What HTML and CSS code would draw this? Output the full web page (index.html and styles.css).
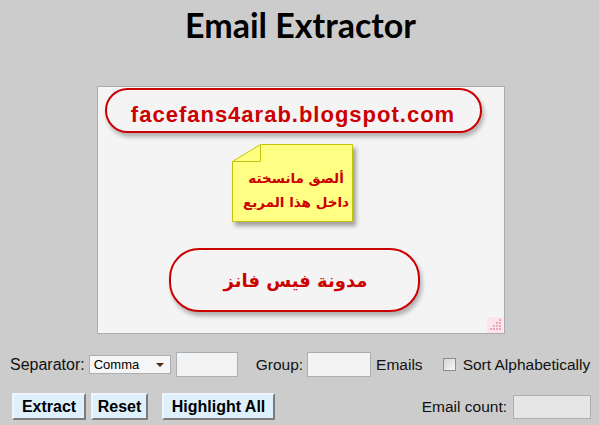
FILE: index.html
```html
<!DOCTYPE html>
<html lang="en">
<head>
<meta charset="utf-8">
<title>Email Extractor</title>
<link rel="stylesheet" href="styles.css">
</head>
<body>
<div class="page">
  <h1 class="title">Email Extractor</h1>

  <div class="editor">
    <div class="pill pill-url">facefans4arab.blogspot.com</div>
    <div class="note">
      <svg class="note-shape" width="121" height="78" viewBox="0 0 121 78">
        <polygon points="0.5,17.5 28.5,0.5 120.5,0.5 120.5,77.5 0.5,77.5" fill="#ffff84" stroke="#c4c20a" stroke-width="1"/>
        <polyline points="0.5,17.5 28.5,17.5 28.5,0.5" fill="none" stroke="#c4c20a" stroke-width="1"/>
      </svg>
      <div class="note-text" dir="rtl">
        <div>ألصق مانسخته</div>
        <div>داخل هذا المربع</div>
      </div>
    </div>
    <div class="pill pill-name" dir="rtl">مدونة فيس فانز</div>
    <svg class="grip" width="16" height="16" viewBox="0 0 16 16">
      <rect width="16" height="16" fill="#fde3ea"/>
      <g fill="#eca6b6">
        <rect x="12" y="2" width="2" height="2"/>
        <rect x="9" y="5" width="2" height="2"/><rect x="12" y="5" width="2" height="2"/>
        <rect x="6" y="8" width="2" height="2"/><rect x="9" y="8" width="2" height="2"/><rect x="12" y="8" width="2" height="2"/>
        <rect x="3" y="11" width="2" height="2"/><rect x="6" y="11" width="2" height="2"/><rect x="9" y="11" width="2" height="2"/><rect x="12" y="11" width="2" height="2"/>
      </g>
    </svg>
  </div>

  <div class="row row-options">
    <span class="label label-sep">Separator:</span>
    <span class="select-wrap">
      <select class="select"><option>Comma</option></select>
    </span>
    <input class="field field-sep" type="text">
    <span class="label label-group">Group:</span>
    <input class="field field-group" type="text">
    <span class="label label-emails">Emails</span>
    <input class="check" type="checkbox" id="sort">
    <label class="label label-sort" for="sort">Sort Alphabetically</label>
  </div>

  <div class="row row-actions">
    <div class="buttons">
      <button class="btn btn-extract">Extract</button>
      <button class="btn btn-reset">Reset</button>
      <button class="btn btn-highlight">Highlight All</button>
    </div>
    <div class="count">
      <span class="label">Email count:</span>
      <input class="field field-count" type="text" readonly>
    </div>
  </div>
</div>
</body>
</html>
```

FILE: styles.css
```css
html, body {
  margin: 0;
  padding: 0;
  background: #cccccc;
}

.page {
  padding: 0 8px 0 10px;
  font-family: "Liberation Sans", Arial, sans-serif;
  color: #111;
}

.title {
  margin: 5px 0 0;
  font-family: Lato, "Liberation Sans", sans-serif;
  font-weight: 700;
  font-size: 34px;
  line-height: 40px;
  text-align: center;
  color: #000;
}

.editor {
  position: relative;
  box-sizing: border-box;
  width: 408px;
  height: 248px;
  margin: 41px auto 0;
  border: 1px solid #a9adb1;
  background: #f4f4f4;
  display: flex;
  flex-direction: column;
  align-items: flex-start;
}

.pill {
  box-sizing: border-box;
  border: 2px solid #cc0000;
  color: #cc0000;
  font-weight: 700;
  text-align: center;
  background: #f4f4f4;
  box-shadow: 2px 4px 4px rgba(0, 0, 0, 0.28), inset 0 0 2px #fff;
}

.pill-url {
  width: 377px;
  height: 45px;
  margin: 1px 0 0 7px;
  border-radius: 23px;
  padding-top: 12px;
  font-size: 22px;
  line-height: 25px;
  letter-spacing: 1px;
}

.note {
  position: relative;
  width: 121px;
  height: 78px;
  margin: 11px 0 0 134px;
}

.note-shape {
  position: absolute;
  left: 0;
  top: 0;
  filter: drop-shadow(3px 4px 2px rgba(0, 0, 0, 0.35));
}

.note-text {
  position: relative;
  padding: 22px 0 0 8px;
  font-family: "DejaVu Sans", sans-serif;
  font-weight: 700;
  font-size: 13.5px;
  line-height: 24px;
  color: #cc0000;
  text-align: center;
  white-space: nowrap;
}

.pill-name {
  width: 251px;
  height: 64px;
  margin: 26px 0 0 71px;
  border-radius: 30px;
  display: flex;
  align-items: center;
  justify-content: center;
  font-family: "DejaVu Sans", sans-serif;
  font-size: 18px;
  padding-left: 3px;
}

.grip {
  position: absolute;
  right: 1px;
  bottom: 0;
}

.row {
  display: flex;
  align-items: center;
}

.label {
  font-size: 15.5px;
  color: #111;
  white-space: nowrap;
  flex-shrink: 0;
}

.label-sep {
  font-size: 16px;
}

.row-options {
  margin-top: 18px;
  height: 25px;
}

.select-wrap {
  position: relative;
  flex-shrink: 0;
  margin-left: 4px;
  width: 82px;
  height: 19px;
}

.select-wrap::after {
  content: "";
  position: absolute;
  right: 7px;
  top: 8px;
  border-left: 4px solid transparent;
  border-right: 4px solid transparent;
  border-top: 4px solid #4a2a12;
}

.select {
  appearance: none;
  -webkit-appearance: none;
  box-sizing: border-box;
  width: 82px;
  height: 19px;
  margin: 0;
  padding: 0 0 0 4px;
  border: 1px solid #a9b0b5;
  border-radius: 0;
  background: #f6f6f6;
  font-family: "Liberation Sans", Arial, sans-serif;
  font-size: 13px;
  color: #000;
}

.field {
  box-sizing: border-box;
  flex-shrink: 0;
  height: 25px;
  margin: 0;
  padding: 0 3px;
  border: 1px solid #a9b0b5;
  background: #f3f3f3;
  font-family: "Liberation Sans", Arial, sans-serif;
  font-size: 14px;
}

.field-sep {
  width: 62px;
  margin-left: 5px;
}

.label-group {
  margin-left: 18px;
}

.field-group {
  width: 64px;
  margin-left: 4px;
}

.label-emails {
  margin-left: 5px;
}

.check {
  appearance: none;
  -webkit-appearance: none;
  box-sizing: border-box;
  flex-shrink: 0;
  width: 13px;
  height: 13px;
  margin: 0 0 0 20px;
  border: 1px solid #8c8c8c;
  background: linear-gradient(135deg, #d4d4d4, #f8f8f8);
}

.label-sort {
  margin-left: 7px;
}

.row-actions {
  margin-top: 16px;
  height: 27px;
  justify-content: space-between;
}

.buttons {
  display: flex;
  padding-left: 2px;
}

.btn {
  box-sizing: border-box;
  height: 27px;
  padding: 0;
  margin: 0;
  border: 2px solid;
  border-color: #eef6fc #7c7c7c #7c7c7c #eef6fc;
  background: #ddf0fc;
  font-family: "Liberation Sans", Arial, sans-serif;
  font-weight: 700;
  font-size: 16px;
  color: #000;
  text-align: center;
}

.btn-extract {
  width: 74px;
}

.btn-reset {
  width: 57px;
  margin-left: 5px;
}

.btn-highlight {
  width: 113px;
  margin-left: 14px;
}

.count {
  display: flex;
  align-items: center;
}

.field-count {
  width: 78px;
  height: 24px;
  margin-left: 6px;
  background: #e6e6e6;
}
```
